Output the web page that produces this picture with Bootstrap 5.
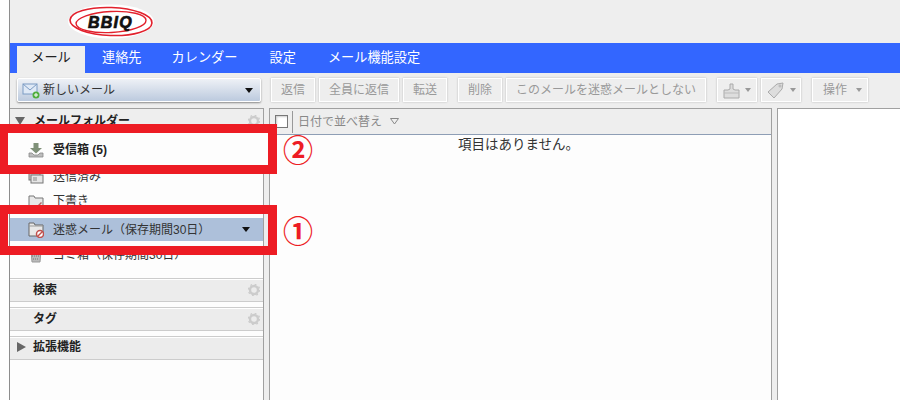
<!DOCTYPE html>
<html lang="ja">
<head>
<meta charset="utf-8">
<title>BBIQ メール</title>
<link href="https://cdn.jsdelivr.net/npm/bootstrap@5.3.0/dist/css/bootstrap.min.css" rel="stylesheet">
<style>
html,body{height:400px;overflow:hidden;background:#fff}
body{font-family:"Liberation Sans","Noto Sans CJK JP",sans-serif;font-size:12px;color:#222;position:relative}
.shell{margin-left:9px;height:400px;border-left:1px solid #8e8e8e;background:#eee;overflow:hidden}
.topbar{height:43px;padding-left:57px;padding-top:4px}
.tabbar{height:30px;background:#36f;padding:3px 0 0 7px;font-size:13.2px}
.tabitem{height:27px;line-height:24px;color:#fff;white-space:nowrap}
.tabitem.on{background:#eee;color:#222;width:68px;text-align:center;margin-right:17px}
.tabgap30{margin-right:30px}
.tabgap32{margin-right:32px}
.tools{height:35px;padding:5px 0 0 7px}
.newmail{width:244px;height:24px;border-radius:2px;border:1px solid #fff;background:linear-gradient(#eef1f6,#bccade);box-shadow:0 1px 2px #888;color:#333;padding:0 7px 0 4px;font-size:12px;gap:3px}
.toolbtn{height:24px;line-height:22px;border:1px solid #fff;box-shadow:0 0 2px #bbb;color:#999;background:#eee;padding:0 9px;white-space:nowrap}
.gap4{margin-left:4px}
.gap10{margin-left:10px}
.gap11{margin-left:11px}
.iconbtn{width:40px;padding:0 0 0 5px;gap:5px}
.actbtn{width:56px;padding:0 0 0 10px;gap:9px}
.caretdown{width:0;height:0;border-left:5px solid transparent;border-right:5px solid transparent;border-top:5px solid #111}
.caretsm{border-left-width:4.5px;border-right-width:4.5px;border-top-width:5px}
.caretgray{border-left-width:3.5px;border-right-width:3.5px;border-top:4px solid #999}
.panes{height:292px}
.sidepane{width:254px;background:#fdfdfd;border:solid #a0a0a0;border-width:1px 1px 0 0;margin-right:5px}
.sidehead{height:27px;background:#eee;padding:0 3px 3px 5px;font-weight:700}
.labelhead{margin-left:9px}
.treerow{height:24px;padding-left:18px;color:#333;gap:9px;font-size:12px}
.firstrow{height:29px}
.treerow.sel{background:#adc0da;margin:5px 0 2px;height:23px;padding-right:13px}
.lastrow{margin-bottom:11px}
.sect{height:24px;background:#ececec;border-top:1px solid #ccc;border-bottom:1px solid #ccc;box-shadow:inset 0 1px 0 #fff;margin-bottom:5px;font-weight:700;padding:0 3px 0 23px}
.sectarrow{padding-left:7px;padding-bottom:2px}
.labelext{margin-left:7px}
.listpane{width:503px;background:#fdfdfd;border:1px solid #a0a0a0;border-bottom:0;margin-right:5px}
.listhead{height:26px;background:#eee;border-bottom:1px solid #8e9eb5;padding-left:5px;color:#888}
.chk{width:13px;height:13px;background:#fff;border:1px solid #777;box-shadow:inset 1px 1px 2px #ccc}
.vsep{width:1px;height:22px;background:#999;margin:0 5px 0 4px}
.emptymsg{font-size:13.5px;text-align:center;color:#333;line-height:18px;padding:1px 4px 0 0}
.readpane{flex:1;background:#fff;border:solid #a0a0a0;border-width:1px 0 0 1px}
.redbox{position:absolute;border:9px solid #ed1c24;left:-1px;width:278px;height:50px}
.boxa{top:124px;background:#fdfdfd}
.boxb{top:205px}
.rednum{position:absolute;left:283px;color:#ed1c24;font-size:30px;line-height:30px;font-family:"Noto Sans CJK JP",sans-serif;font-weight:700}
.numa{top:133px}
.numb{top:214px}
.overtext{position:absolute;left:28px;gap:9px;top:137px;height:26px;font-weight:700;color:#222}
.logotext{font:italic 700 16px "Liberation Sans",sans-serif;letter-spacing:1.2px;fill:#111;stroke:#111;stroke-width:.7}
.arrowright{width:0;height:0;border-top:5px solid transparent;border-bottom:5px solid transparent;border-left:9px solid #666}
.arrowdown{width:0;height:0;border-left:5px solid transparent;border-right:5px solid transparent;border-top:8px solid #666}
.gear{margin-left:auto}
</style>
</head>
<body>
<div class="shell">
  <div class="topbar">
    <svg width="90" height="35" viewBox="0 0 90 35">
      <ellipse cx="44" cy="17.500" rx="43" ry="17" fill="#fff"/>
      <ellipse cx="44" cy="17.500" rx="41" ry="14" fill="none" stroke="#e2202c" stroke-width="1.600" transform="rotate(2 44 17)"/>
      <ellipse cx="44" cy="18" rx="35" ry="10.500" fill="none" stroke="#e2202c" stroke-width="1.400" transform="rotate(-3 44 17)"/>
      <text class="logotext" x="21" y="24">BBIQ</text>
    </svg>
  </div>
  <div class="tabbar d-flex">
    <div class="tabitem on">メール</div>
    <div class="tabitem tabgap30">連絡先</div>
    <div class="tabitem tabgap32">カレンダー</div>
    <div class="tabitem tabgap32">設定</div>
    <div class="tabitem">メール機能設定</div>
  </div>
  <div class="tools d-flex">
    <div class="newmail d-flex align-items-center">
      <svg width="18" height="18" viewBox="0 0 18 18" class="flex-shrink-0"><rect x="1" y="3" width="14" height="10" fill="#dfe9f6" stroke="#7d9cc4"/><path d="M1 3l7 6 7-6" fill="none" stroke="#7d9cc4"/><circle cx="14" cy="14" r="3.500" fill="#4fae3b"/><path d="M14 12v4M12 14h4" stroke="#fff"/></svg>
      <span class="flex-grow-1">新しいメール</span>
      <span class="caretdown caretsm"></span>
    </div>
    <div class="toolbtn gap10">返信</div>
    <div class="toolbtn gap4">全員に返信</div>
    <div class="toolbtn gap4">転送</div>
    <div class="toolbtn gap11">削除</div>
    <div class="toolbtn gap4">このメールを迷惑メールとしない</div>
    <div class="toolbtn iconbtn d-flex align-items-center gap11">
      <svg width="17" height="17" viewBox="0 0 17 17"><path d="M1 8h4l2-1V2h3v5l2 1h4v8H1z" fill="#ddd" stroke="#aaa"/><path d="M1 11h15" stroke="#bbb"/></svg>
      <span class="caretdown caretgray"></span>
    </div>
    <div class="toolbtn iconbtn d-flex align-items-center gap4">
      <svg width="18" height="18" viewBox="0 0 18 18"><path d="M1 11L10 3l6-1-1 6-8 9z" fill="#ddd" stroke="#aaa"/><circle cx="13" cy="5" r="1" fill="#fff" stroke="#aaa"/></svg>
      <span class="caretdown caretgray"></span>
    </div>
    <div class="toolbtn actbtn d-flex align-items-center gap11">操作<span class="caretdown caretgray"></span></div>
  </div>
  <div class="panes d-flex">
    <div class="sidepane">
      <div class="sidehead d-flex align-items-center">
        <span class="arrowdown"></span><span class="labelhead">メールフォルダー</span>
        <svg class="gear" width="12" height="12" viewBox="0 0 12 12"><circle cx="6" cy="6" r="4" fill="none" stroke="#ccc" stroke-width="2.400"/><circle cx="6" cy="6" r="5.600" fill="none" stroke="#ccc" stroke-width="1.400" stroke-dasharray="1.800 2.600"/></svg>
      </div>
      <div class="treerow firstrow"></div>
      <div class="treerow d-flex align-items-center">
        <svg width="16" height="16" viewBox="0 0 16 16"><rect x="1" y="3" width="11" height="8" fill="#ccc" stroke="#777"/><rect x="3" y="6" width="12" height="8" fill="#e6e6e6" stroke="#777"/><path d="M5 9h4M5 11h4" stroke="#888"/></svg>
        <span>送信済み</span>
      </div>
      <div class="treerow d-flex align-items-center">
        <svg width="16" height="16" viewBox="0 0 16 16"><path d="M1 3h5l1 2h8v9H1z" fill="#e8e8e8" stroke="#777"/><path d="M9 13l4-4 1 1-4 4z" fill="#a66"/></svg>
        <span>下書き</span>
      </div>
      <div class="treerow sel d-flex align-items-center">
        <svg width="16" height="16" viewBox="0 0 16 16"><path d="M1 1h5l1 2h8v11H1z" fill="#e8e8e8" stroke="#666"/><path d="M1 4h14" stroke="#999"/><circle cx="12" cy="12" r="3.500" fill="#fff" stroke="#c0504d" stroke-width="1.500"/><path d="M9.500 14.500l5-5" stroke="#c0504d" stroke-width="1.500"/></svg>
        <span class="flex-grow-1">迷惑メール（保存期間30日）</span>
        <span class="caretdown caretsm"></span>
      </div>
      <div class="treerow lastrow d-flex align-items-center">
        <svg width="16" height="16" viewBox="0 0 16 16"><path d="M3 3h10l-1 12H4z" fill="#bbb" stroke="#999"/><path d="M4 6h8M4 9h8M5 12h6" stroke="#777" stroke-dasharray="1 1"/></svg>
        <span>ゴミ箱（保存期間30日）</span>
      </div>
      <div class="sect d-flex align-items-center">
        <span>検索</span>
        <svg class="gear" width="12" height="12" viewBox="0 0 12 12"><circle cx="6" cy="6" r="4" fill="none" stroke="#ccc" stroke-width="2.400"/><circle cx="6" cy="6" r="5.600" fill="none" stroke="#ccc" stroke-width="1.400" stroke-dasharray="1.800 2.600"/></svg>
      </div>
      <div class="sect d-flex align-items-center">
        <span>タグ</span>
        <svg class="gear" width="12" height="12" viewBox="0 0 12 12"><circle cx="6" cy="6" r="4" fill="none" stroke="#ccc" stroke-width="2.400"/><circle cx="6" cy="6" r="5.600" fill="none" stroke="#ccc" stroke-width="1.400" stroke-dasharray="1.800 2.600"/></svg>
      </div>
      <div class="sect sectarrow d-flex align-items-center">
        <span class="arrowright"></span><span class="labelext">拡張機能</span>
      </div>
    </div>
    <div class="listpane">
      <div class="listhead d-flex align-items-center">
        <span class="chk"></span><span class="vsep"></span><span>日付で並べ替え</span>
        <svg class="ms-2" width="9" height="7" viewBox="0 0 9 7"><path d="M.5.5h8L4.500 6z" fill="none" stroke="#888"/></svg>
      </div>
      <div class="emptymsg">項目はありません。</div>
    </div>
    <div class="readpane"></div>
  </div>
</div>
<div class="redbox boxa"></div>
<div class="overtext d-flex align-items-center">
  <svg width="16" height="16" viewBox="0 0 16 16"><path d="M5.500 1h5v5H14L8 11.500 2 6h3.500z" fill="#7f9078"/><path d="M1 11h3l2 2h4l2-2h3v4H1z" fill="#bdbdbd" stroke="#888" stroke-width=".8"/></svg>
  <span>受信箱 (5)</span>
</div>
<div class="redbox boxb"></div>
<div class="rednum numa">②</div>
<div class="rednum numb">①</div>
</body>
</html>
